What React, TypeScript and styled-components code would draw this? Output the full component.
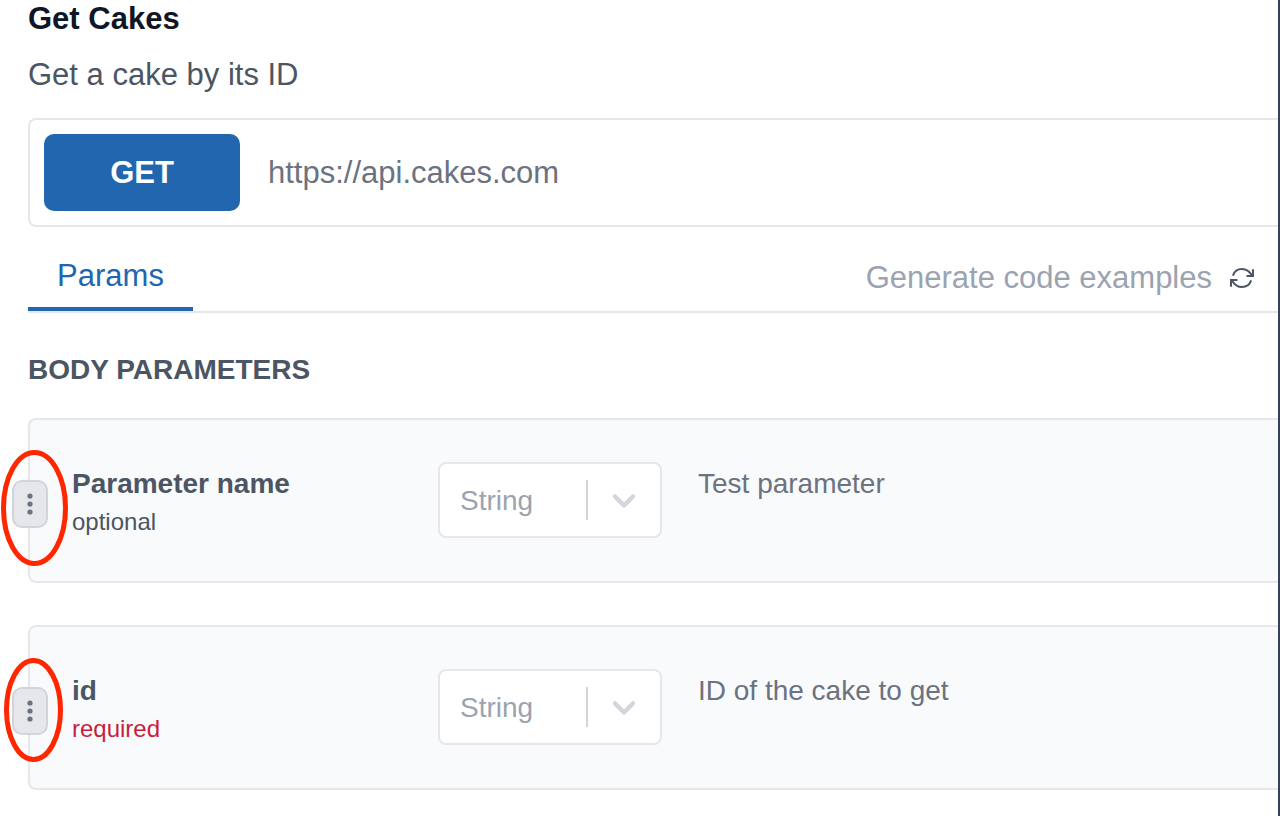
import React from "react";
import styled, { createGlobalStyle } from "styled-components";

const GlobalStyle = createGlobalStyle`
  *, *::before, *::after { box-sizing: border-box; }
  html, body, #root { height: 100%; }
  body {
    margin: 0;
    background: #fff;
    color: #4b5563;
    font-family: Helvetica, "Liberation Sans", Arial, sans-serif;
    overflow: hidden;
  }
  h1, h2, h3, p { margin: 0; }
  button, input, select { font: inherit; }
`;

const Page = styled.main`
  min-height: 100%;
  padding-left: 28px;
  border-right: 2px solid #364257;
  overflow: hidden;
`;

const Title = styled.h1`
  color: #0f1626;
  font-size: 31px;
  line-height: 38px;
`;

const Description = styled.p`
  margin-top: 18px;
  font-size: 31px;
  line-height: 38px;
`;

const Endpoint = styled.div`
  display: flex;
  align-items: center;
  gap: 28px;
  margin-top: 24px;
  padding: 14px;
  border: 2px solid #e5e7eb;
  border-right: 0;
  border-radius: 8px 0 0 8px;
`;

const Method = styled.button`
  flex: none;
  width: 196px;
  height: 77px;
  border: 0;
  border-radius: 10px;
  background: #2166ae;
  color: #fff;
  font-size: 31px;
  font-weight: 700;
`;

const Url = styled.input`
  flex: 1;
  min-width: 0;
  padding: 0;
  border: 0;
  outline: 0;
  background: none;
  color: #6b7280;
  font-size: 31px;
`;

const TabBar = styled.div`
  display: flex;
  justify-content: space-between;
  align-items: stretch;
  height: 86px;
  padding-right: 24px;
  border-bottom: 2px solid #e5e7eb;
`;

const Tab = styled.button`
  min-width: 165px;
  padding: 18px 28px 0;
  border: 0;
  border-bottom: 4px solid #2166ae;
  background: none;
  color: #2166ae;
  font-size: 31px;
`;

const Generate = styled.button`
  display: flex;
  align-items: center;
  gap: 18px;
  padding: 18px 0 0;
  border: 0;
  background: none;
  color: #9ca3af;
  font-size: 31px;
`;

const SectionTitle = styled.h2`
  margin: 40px 0 32px;
  font-size: 28px;
  line-height: 33px;
`;

const ParamList = styled.div`
  display: grid;
  gap: 42px;
`;

const ParamCard = styled.section`
  position: relative;
  display: grid;
  grid-template-columns: 330px 224px 1fr;
  column-gap: 36px;
  align-items: start;
  min-height: 165px;
  padding: 42px;
  border: 2px solid #e5e7eb;
  border-right: 0;
  border-radius: 8px 0 0 8px;
  background: #f9fafb;
`;

const ParamName = styled.h3`
  margin-top: 4px;
  font-size: 28px;
  line-height: 36px;
`;

const Requirement = styled.p<{ $required?: boolean }>`
  margin-top: 4px;
  color: ${({ $required }) => ($required ? "#c81e3c" : "#4b5563")};
  font-size: 24px;
  line-height: 32px;
`;

const ParamText = styled.p`
  margin-top: 4px;
  color: #6b7280;
  font-size: 28px;
  line-height: 36px;
`;

const SelectBox = styled.div`
  display: grid;
  align-items: center;
  height: 76px;
  border: 2px solid #e5e7eb;
  border-radius: 8px;
  background: #fff;

  & > * { grid-area: 1 / 1; }
`;

const Select = styled.select`
  appearance: none;
  width: 100%;
  height: 100%;
  padding: 0 76px 0 20px;
  border: 0;
  outline: 0;
  background: none;
  color: #9ca3af;
  font-size: 28px;
`;

const Indicator = styled.svg`
  justify-self: end;
  pointer-events: none;
`;

const Handle = styled.button`
  position: absolute;
  top: 60px;
  left: -18px;
  display: grid;
  place-items: center;
  width: 36px;
  height: 48px;
  padding: 0;
  border: 2px solid #d1d5db;
  border-radius: 10px;
  background: #e5e7eb;
`;

const Highlight = styled.svg<{ $top: number; $left: number }>`
  position: absolute;
  top: ${({ $top }) => $top}px;
  left: ${({ $left }) => $left}px;
  pointer-events: none;
`;

type Ring = { top: number; left: number; width: number; height: number };

type Param = {
  name: string;
  required: boolean;
  text: string;
  ring: Ring;
};

const params: Param[] = [
  {
    name: "Parameter name",
    required: false,
    text: "Test parameter",
    ring: { top: 30, left: -29, width: 67, height: 116 },
  },
  {
    name: "id",
    required: true,
    text: "ID of the cake to get",
    ring: { top: 31, left: -26, width: 59, height: 104 },
  },
];

function RefreshIcon() {
  return (
    <svg width="24" height="20" viewBox="0 0 24 20" fill="none" stroke="#4b5563" strokeWidth="2" aria-hidden="true">
      <path d="M2.9 7.6C4.2 3.6 7.6 1 12 1c4.4 0 7.6 2.4 10 6.6M21.1 12.4C19.8 16.4 16.4 19 12 19c-4.4 0-7.6-2.4-10-6.6" />
      <path d="M23 1.2V8h-6.5M1 18.8V12h6.5" />
    </svg>
  );
}

function ParamRow({ name, required, text, ring }: Param) {
  return (
    <ParamCard>
      <div>
        <ParamName>{name}</ParamName>
        <Requirement $required={required}>{required ? "required" : "optional"}</Requirement>
      </div>
      <SelectBox>
        <Select aria-label={`Type of ${name}`} defaultValue="String">
          <option>String</option>
        </Select>
        <Indicator width="76" height="40" viewBox="0 0 76 40" fill="none" aria-hidden="true">
          <path d="M3 0v40" stroke="#d1d5db" strokeWidth="2" />
          <path d="M31 16.5l9 9 9-9" stroke="#d4d6dd" strokeWidth="4.5" strokeLinecap="round" strokeLinejoin="round" />
        </Indicator>
      </SelectBox>
      <ParamText>{text}</ParamText>
      <Handle aria-label={`Options for ${name}`}>
        <svg width="8" height="24" viewBox="0 0 8 24" fill="#6b7280" aria-hidden="true">
          <circle cx="4" cy="4" r="2.6" />
          <circle cx="4" cy="12" r="2.6" />
          <circle cx="4" cy="20" r="2.6" />
        </svg>
      </Handle>
      <Highlight $top={ring.top} $left={ring.left} width={ring.width} height={ring.height} aria-hidden="true">
        <ellipse
          cx="50%"
          cy="50%"
          rx={ring.width / 2 - 2.5}
          ry={ring.height / 2 - 2.5}
          fill="none"
          stroke="#ff2600"
          strokeWidth="5"
        />
      </Highlight>
    </ParamCard>
  );
}

export default function App() {
  return (
    <>
      <GlobalStyle />
      <Page>
        <Title>Get Cakes</Title>
        <Description>Get a cake by its ID</Description>
        <Endpoint>
          <Method>GET</Method>
          <Url aria-label="Request URL" defaultValue="https://api.cakes.com" />
        </Endpoint>
        <TabBar>
          <Tab>Params</Tab>
          <Generate>
            Generate code examples
            <RefreshIcon />
          </Generate>
        </TabBar>
        <SectionTitle>BODY PARAMETERS</SectionTitle>
        <ParamList>
          {params.map((param) => (
            <ParamRow key={param.name} {...param} />
          ))}
        </ParamList>
      </Page>
    </>
  );
}
